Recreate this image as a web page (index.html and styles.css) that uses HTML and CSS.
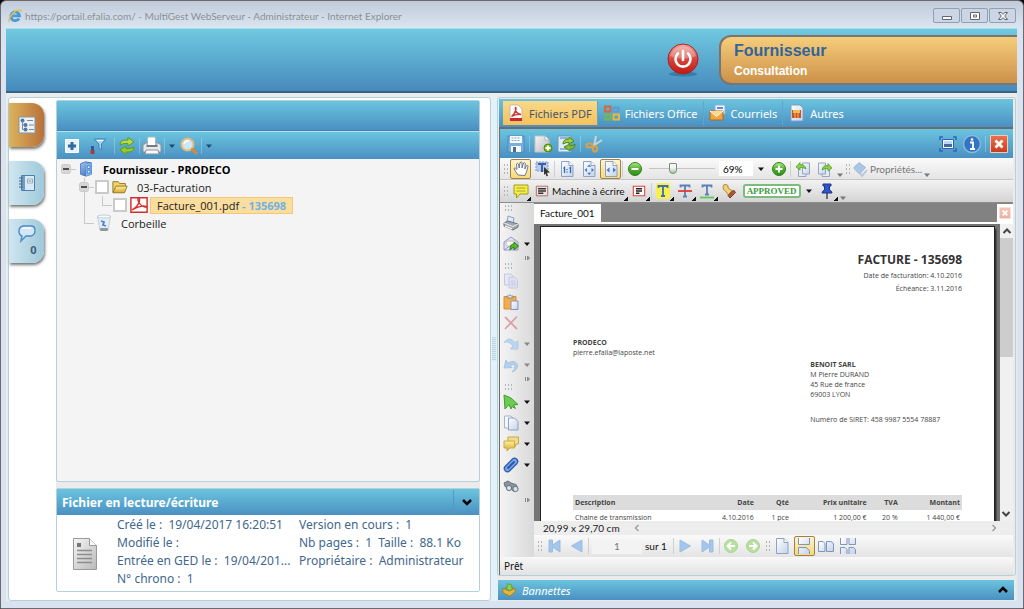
FILE: index.html
```html
<!DOCTYPE html>
<html lang="fr">
<head>
    <meta charset="UTF-8">
    <meta name="viewport" content="width=device-width, initial-scale=1.0">
    <title>MultiGest WebServeur - Administrateur</title>
    <link rel="stylesheet" href="styles.css">
</head>
<body>
    <!-- Icones -->
    <svg class="sprite" aria-hidden="true">
        <defs>
            <linearGradient id="gRed" x1="0" y1="0" x2="0" y2="1"><stop offset="0" stop-color="#f0a8a4"/><stop offset=".5" stop-color="#d8463c"/><stop offset="1" stop-color="#c01810"/></linearGradient>
            <linearGradient id="gPage" x1="0" y1="0" x2="1" y2="1"><stop offset="0" stop-color="#ffffff"/><stop offset="1" stop-color="#c3d2ea"/></linearGradient>
            <linearGradient id="gGrey" x1="0" y1="0" x2="1" y2="1"><stop offset="0" stop-color="#f6f6f6"/><stop offset="1" stop-color="#b9b9b9"/></linearGradient>
            <linearGradient id="gGreen" x1="0" y1="0" x2="0" y2="1"><stop offset="0" stop-color="#b4e88c"/><stop offset=".5" stop-color="#4fae2c"/><stop offset="1" stop-color="#2f8f18"/></linearGradient>
            <linearGradient id="gBlue" x1="0" y1="0" x2="1" y2="1"><stop offset="0" stop-color="#a9cdf5"/><stop offset="1" stop-color="#2355a8"/></linearGradient>
            <linearGradient id="gGold" x1="0" y1="0" x2="0" y2="1"><stop offset="0" stop-color="#fff0a0"/><stop offset="1" stop-color="#d9a52c"/></linearGradient>
            <linearGradient id="gClose" x1="0" y1="0" x2="0" y2="1"><stop offset="0" stop-color="#e8744e"/><stop offset="1" stop-color="#c93c1c"/></linearGradient>
        </defs>
        <symbol id="ie" viewBox="0 0 16 16"><path d="M12.600 10.800A5 5 0 1 1 13.200 7.800H5" fill="none" stroke="#4a9ad4" stroke-width="3.200"/><path d="M2 14.600C-.6 12.600 3.600 5.600 8.600 2.500 12.200.400 15.400.400 15.100 3.400" fill="none" stroke="#e6c04a" stroke-width="1.700"/></symbol>
        <symbol id="power" viewBox="0 0 32 34"><ellipse cx="16" cy="31" rx="14" ry="2.500" fill="#1f5d8c" opacity=".5"/><circle cx="16" cy="16" r="15" fill="url(#gRed)" stroke="#a8251f"/><path d="M3 13a13.500 13.500 0 0 1 26 0q-13 6-26 0z" fill="#fff" opacity=".28"/><path d="M11 10.500a7.500 7.500 0 1 0 10 0M16 8v9" fill="none" stroke="#fff" stroke-width="2.600" stroke-linecap="round"/></symbol>
        <symbol id="treeTab" viewBox="0 0 18 18"><path d="M1 1h16v16H1z" fill="#eef2f7" stroke="#8795a8"/><circle cx="4.500" cy="4.500" r="2" fill="#4878a8"/><circle cx="7.500" cy="9" r="2" fill="#4878a8"/><circle cx="7.500" cy="13.500" r="2" fill="#4878a8"/><path d="M4.500 5v8.500h2M4.500 9h2M9 4.500h6M11 9h5M11 13.500h5" fill="none" stroke="#7b899a"/></symbol>
        <symbol id="bookTab" viewBox="0 0 18 18"><path d="M3.500 1.500h13v15h-13z" fill="#dbe9f6" stroke="#4b7faf"/><path d="M4 2h3v14H4z" fill="#6d9dc8"/><path d="M9.500 5h5v4h-5z" fill="#fff" stroke="#9ab"/><path d="M10.500 7h3" stroke="#56789a"/><path d="M1 4h4M1 7h4M1 10h4M1 13h4" stroke="#4a6687"/></symbol>
        <symbol id="talkTab" viewBox="0 0 18 18"><path d="M5 1h8q4 0 4 4.500T13 11H8l-5 5 1-5Q1 10 1 6t4-5z" fill="#d2e7fa" stroke="#4c8bc4" stroke-width="1.400"/><path d="M4 4q2-1.500 9-1" stroke="#fff" stroke-width="1.500" fill="none"/></symbol>
        <symbol id="plus" viewBox="0 0 16 16"><path d="M1.500 1.500h13v13h-13z" fill="#e8f2fb" stroke="#fff"/><path d="M8 4v8M4 8h8" stroke="#2f6aa3" stroke-width="3"/></symbol>
        <symbol id="filter" viewBox="0 0 18 18"><path d="M5 2h12l-4.500 5v6l-2.500-2V7z" fill="#a8d3f3" stroke="#4181bb"/><path d="M8 3.500h6" stroke="#fff"/><path d="M2 9h3v4H2z" fill="#31599a"/><path d="M1.500 13h4v4h-4z" fill="#a0403c"/></symbol>
        <symbol id="refresh" viewBox="0 0 18 18"><path d="M2 8q0-5 6-5h2V.500L16 5l-6 4V6.500H7Q5 6.500 2 8z" fill="#b5dc48" stroke="#5f9a1c"/><path d="M16 10q0 5-6 5H8v2.500L2 13l6-4v2.500h3q2 0 5-1.500z" fill="#95cb32" stroke="#5f9a1c"/></symbol>
        <symbol id="print" viewBox="0 0 20 20"><path d="M6 1h7l1 9H5z" fill="#fff" stroke="#b3b9c1"/><path d="M1 9l3-2h12l3 2v7H1z" fill="#e6e8eb" stroke="#8a929b"/><path d="M4.500 8.500h11V11h-11z" fill="#737b85"/><path d="M6 2h7v7H6z" fill="#fff"/><path d="M4 14h12l1 4H3z" fill="#fafafa" stroke="#8b929b"/></symbol>
        <symbol id="search" viewBox="0 0 18 18"><circle cx="7.500" cy="7.500" r="6" fill="#cce8f8" stroke="#e6bb78" stroke-width="2"/><path d="M4 7q1-4 5-3" stroke="#fff" stroke-width="1.500" fill="none"/><path d="M12.500 12.500l3.500 3.500" stroke="#d68a3c" stroke-width="3" stroke-linecap="round"/></symbol>
        <symbol id="caret" viewBox="0 0 8 8"><path d="M1 2.500h6L4 6z" fill="currentColor"/></symbol>
        <symbol id="more" viewBox="0 0 8 8"><path d="M1.500 2v4M3.500 2L5.500 4l-2 2z" fill="#999" stroke="#888"/></symbol>
        <symbol id="minusBox" viewBox="0 0 10 10"><rect x=".5" y=".5" width="9" height="9" rx="2" fill="#d6d6d6" stroke="#cacaca"/><path d="M2 5h6" stroke="#222" stroke-width="1.500"/></symbol>
        <symbol id="cabinet" viewBox="0 0 16 18"><path d="M2 3l5-2 7 1v13l-6 2-6-2z" fill="url(#gBlue)" stroke="#3a6db8"/><path d="M8 3.500l6-1v13l-6 1.500z" fill="#7eb2ee"/><path d="M9.500 5.500h3v3h-3zM9.500 10.500h3v3h-3z" fill="#e9f4ff" stroke="#4a80c4"/></symbol>
        <symbol id="folder" viewBox="0 0 18 16"><path d="M1 14V2h6l1.500 2H15v3" fill="#f1d06a" stroke="#8d7220"/><path d="M1 14.500L4.500 7H17l-3 7.500z" fill="url(#gGold)" stroke="#8d7220"/></symbol>
        <symbol id="pdf" viewBox="0 0 20 18"><path d="M1 1h18v16H1z" fill="#fff" stroke="#d62c28" stroke-width="1.600"/><path d="M2 14.500q6-3 8.500-9.500.5-4-1-3.500-1.500.5 0 4Q12 11 18 11.500q1-1.500-3-1.500-6 .5-13 4.500z" fill="none" stroke="#d62c28" stroke-width="1.500"/></symbol>
        <symbol id="bin" viewBox="0 0 16 18"><path d="M1.500 2h13L12 16.500H4z" fill="#e5edf4" stroke="#c4ced8"/><ellipse cx="8" cy="2.500" rx="6.500" ry="1.500" fill="#f9fcff" stroke="#c4ced8"/><path d="M5 7l3 1-1 3 3 1" fill="none" stroke="#4c84d0" stroke-width="1.800"/><path d="M4 14h8l-.5 3h-7z" fill="#8f979f"/></symbol>
        <symbol id="pdfFile" viewBox="0 0 18 18"><path d="M3 1h8l4 4v12H3z" fill="#fff" stroke="#c4b9b4"/><path d="M3 14h12v3H3z" fill="#cf2a22"/><path d="M4.500 12.500Q8 10 9 5q0-2.500-.7-1-.3 5 5.700 6.500-5-.5-9.500 2z" fill="none" stroke="#d3362d" stroke-width="1.400"/></symbol>
        <symbol id="office" viewBox="0 0 18 18" fill="none" stroke-width="2"><path d="M2 2.500h5.500v5H2z" stroke="#d8653c"/><path d="M10.500 3.500h5v4h-5z" stroke="#5a9bdc"/><path d="M2.500 10.500h5v5h-5z" stroke="#7bb648"/><path d="M10.500 10.500h5.500v5h-5.500z" stroke="#eab83a"/></symbol>
        <symbol id="mail" viewBox="0 0 18 18"><path d="M6 1h10v9H6z" fill="#f0f6ff" stroke="#8aaede"/><path d="M8 3h6v2H8z" fill="#5d8fd4"/><path d="M1 7h13v9H1z" fill="#efa640" stroke="#b9661c"/><path d="M1 7l6.500 5.500L14 7" fill="#ffd88c" stroke="#fff"/></symbol>
        <symbol id="picture" viewBox="0 0 18 18"><path d="M3 1h9l3 3v13H3z" fill="url(#gPage)" stroke="#7f9ccc"/><path d="M4 6h9v8H4z" fill="#c8522a"/><path d="M5 6h7v3H5z" fill="#f3bd4e"/><path d="M7 9v5M10 9v5" stroke="#f3bd4e"/></symbol>
        <symbol id="save" viewBox="0 0 18 18"><path d="M1 1h16v16H1z" fill="#76b0e0" stroke="#4f88c0"/><path d="M3 1h12v7H3z" fill="#f4f9fd"/><path d="M4.500 3h9M4.500 5.500h9" stroke="#8fa4b8" stroke-dasharray="2 1"/><path d="M4 11h10v6H4z" fill="#f7f7f7"/><path d="M6 12h3v5H6z" fill="#4b6d92"/></symbol>
        <symbol id="newDoc" viewBox="0 0 20 18"><path d="M2 1h10l4 4v12H2z" fill="url(#gGrey)" stroke="#c3c3c3"/><path d="M12 1v4h4" fill="#fff" stroke="#b3b3b3"/><circle cx="15" cy="13" r="4" fill="#80bb33" stroke="#4e8715"/><path d="M15 10.500v5M12.500 13h5" stroke="#fff" stroke-width="1.800"/></symbol>
        <symbol id="reload" viewBox="0 0 20 18"><path d="M1 1h13v16H1z" fill="#dcebf8" stroke="#6698c6"/><path d="M3 3h8M3 14h7" stroke="#8fb4d8" stroke-width="2"/><path d="M6 9q0-5 6-5V2l5 4-5 3V7.500Q9 7 6 9z" fill="#a0d13c" stroke="#4c8415"/><path d="M18 9q0 5-5 5v2l-6-4 6-3v2q3 0 5-2z" fill="#87c02e" stroke="#4c8415"/></symbol>
        <symbol id="scissors" viewBox="0 0 18 18"><path d="M11 1L9 11M17 5L8 11" stroke="#c9d3dc" stroke-width="2"/><ellipse cx="4.500" cy="10.500" rx="3" ry="2" fill="none" stroke="#d9a04a" stroke-width="2"/><ellipse cx="10" cy="14" rx="2.200" ry="2.800" fill="none" stroke="#d9a04a" stroke-width="2"/></symbol>
        <symbol id="full" viewBox="0 0 18 18"><path d="M3.500 4.500h11v9h-11z" fill="#fff" stroke="#2b61ae"/><path d="M5 6h8v3H5z" fill="#bcd8f2"/><path d="M5 9h8v3H5z" fill="#46689a"/><path d="M1 5V2h3M14 2h3v3M17 13v3h-3M4 16H1v-3" fill="none" stroke="#2c63c4" stroke-width="1.500"/></symbol>
        <symbol id="info" viewBox="0 0 20 20"><circle cx="10" cy="10" r="8.500" fill="#3475c2" stroke="#8ab8e8" stroke-width="1.500"/><path d="M8 8.500h3V15M8 15h5" fill="none" stroke="#fff" stroke-width="1.800"/><circle cx="10" cy="5.500" r="1.300" fill="#fff"/></symbol>
        <symbol id="closeBox" viewBox="0 0 18 18"><path d="M.5.5h17v17H.5z" fill="url(#gClose)" stroke="#f5c9b8"/><path d="M5.500 5.500l7 7M12.500 5.500l-7 7" stroke="#fff" stroke-width="2.800"/></symbol>
        <symbol id="hand" viewBox="0 0 16 16"><path d="M5 14Q2 10 1 7.500q1-1.500 3 1L3.500 3q1.200-1.200 2 0l.7 4L7 1.500q1.200-1 2 0V7l1.500-5q1.200-.8 1.800.3L11.800 8l1.700-3.500q1.300-.5 1.500.7Q13.500 12 12 14.500z" fill="#fff" stroke="#6d7a90"/></symbol>
        <symbol id="textSel" viewBox="0 0 16 16"><path d="M1 1h12v9H1z" fill="#b9cbe8" stroke="#7e9bc9" stroke-dasharray="2 1"/><path d="M3 3h8M7 3v8" stroke="#3760a6" stroke-width="2"/><path d="M9 6l6 5.500-3 .3 1 3-1.500.7-1-3L9 14z" fill="#333"/></symbol>
        <symbol id="page" viewBox="0 0 16 16"><path d="M2.500.5H10l4 4v11H2.500z" fill="url(#gPage)" stroke="#8da2c4"/><path d="M10 .5v4h4" fill="#fff" stroke="#8da2c4"/></symbol>
        <symbol id="page11" viewBox="0 0 16 16"><use href="#page" width="16" height="16"/><path d="M4.500 7.500l1-1V12M10.500 7.500l1-1V12M8 8v1M8 10.500v1" fill="none" stroke="#2b68c0" stroke-width="1.300"/></symbol>
        <symbol id="pageFit" viewBox="0 0 16 16"><use href="#page" width="16" height="16"/><path d="M8.200 3.500l2 2.300h-4zM8.200 14l2-2.300h-4zM3.500 9l2.500-2v4zM13 9l-2.500-2v4z" fill="#3c7ad0"/></symbol>
        <symbol id="pageWide" viewBox="0 0 16 16"><use href="#page" width="16" height="16"/><path d="M3.500 9l3-2.500v5zM13 9l-3-2.500v5z" fill="#3c7ad0"/></symbol>
        <symbol id="minusBall" viewBox="0 0 16 16"><circle cx="8" cy="8" r="6.500" fill="url(#gGreen)" stroke="#318018"/><path d="M4.500 8h7" stroke="#fff" stroke-width="2"/></symbol>
        <symbol id="plusBall" viewBox="0 0 16 16"><circle cx="8" cy="8" r="6.500" fill="url(#gGreen)" stroke="#318018"/><path d="M4.500 8h7M8 4.500v7" stroke="#fff" stroke-width="2"/></symbol>
        <symbol id="rotL" viewBox="0 0 16 16"><path d="M3.500 5H11v10.500H3.500z" fill="#e5e9f2" stroke="#98a5bc"/><path d="M7.500 2h7v11h-7z" fill="url(#gPage)" stroke="#98a5bc"/><path d="M1 6l4-4.500v2.200q5-.7 6 4.300-3-2-6-1.500V9z" fill="#8ccf4c" stroke="#4b9a20" stroke-width=".7"/></symbol>
        <symbol id="rotR" viewBox="0 0 16 16"><path d="M5 5h7.500v10.500H5z" fill="#e5e9f2" stroke="#98a5bc"/><path d="M1.500 2h7v11h-7z" fill="url(#gPage)" stroke="#98a5bc"/><path d="M15 7l-4-4.500v2.200q-5-.7-6 4.300 3-2 6-1.500V10z" fill="#8ccf4c" stroke="#4b9a20" stroke-width=".7"/></symbol>
        <symbol id="tag" viewBox="0 0 16 16"><path d="M1.500 7L7 1.500l6.500 5L7.500 13z" fill="#a9c6e6" stroke="#9fb8d8"/><path d="M8 12l2 3 5-6" fill="none" stroke="#b5c4dc" stroke-width="1.800"/></symbol>
        <symbol id="note" viewBox="0 0 16 16"><path d="M1 2h14v9H7l-3.500 4V11H1z" fill="#f7ee4a" stroke="#a09a1c"/><path d="M3.500 5h9M3.500 8h9" stroke="#a8a230"/></symbol>
        <symbol id="boxType" viewBox="0 0 16 16"><path d="M1.500 2.500h13v11h-13z" fill="#e8e4e4" stroke="#b0605c"/><path d="M3.500 5.500h9M3.500 8h9M3.500 10.500h6" stroke="#333" stroke-width="1.600"/></symbol>
        <symbol id="box" viewBox="0 0 16 16"><path d="M1.500 2.500h13v11h-13z" fill="#fff" stroke="#e04038" stroke-width="1.200"/><path d="M4.500 5.500h7M4.500 8h7M4.500 10.500h4" stroke="#222" stroke-width="1.600"/></symbol>
        <symbol id="tHigh" viewBox="0 0 16 16"><rect x="1" y="0" width="14" height="16" rx="2" fill="#f8f04e"/><path d="M3.500 5V3h9v2M8 3v10M6 13h4" fill="none" stroke="#3f6db3" stroke-width="1.800"/></symbol>
        <symbol id="tStrike" viewBox="0 0 16 16"><path d="M3.500 4.500V2.500h9v2M8 2.500v11M6 13.500h4" fill="none" stroke="#5a80b8" stroke-width="1.800"/><path d="M1 8h14" stroke="#e03c34" stroke-width="1.800"/></symbol>
        <symbol id="tUnder" viewBox="0 0 16 16"><path d="M3.500 4.500V2.500h9v2M8 2.500v9M6 11.500h4" fill="none" stroke="#5a80b8" stroke-width="1.800"/><path d="M1 14.500h14" stroke="#5bc95b" stroke-width="1.800"/></symbol>
        <symbol id="stamp" viewBox="0 0 16 16"><path d="M2 4q0-3 3-2.500 3 .5 2 3.500l4 2.500-3.500 4.500-3-4Q2 7.500 2 4z" fill="#efd07c" stroke="#b58c36"/><path d="M7 12.500L12.500 7l2 2.500L9 15z" fill="#a85a36" stroke="#7e3c20"/></symbol>
        <symbol id="pin" viewBox="0 0 16 16"><path d="M4 1h8v2h-1.500v4Q13 8 13 10H3q0-2 2.500-3V3H4z" fill="#3055c8" stroke="#1b3590"/><path d="M8 10v6" stroke="#333" stroke-width="1.300"/></symbol>
        <symbol id="printer" viewBox="0 0 16 16"><path d="M5 1l6 2-1 6-6-2z" fill="#dcebfb" stroke="#8ba3c2"/><path d="M1 8l4-2 10 3v3l-5 3-9-4z" fill="#a4a9ae" stroke="#6a6e73"/><path d="M1 8l9 3.500L15 9" fill="none" stroke="#eee"/><path d="M2 11l7 3" stroke="#fff" stroke-width="1.300"/></symbol>
        <symbol id="send" viewBox="0 0 16 16"><path d="M1 6l7-5 7 5v8H1z" fill="#e1e3fa" stroke="#9496d0"/><path d="M3 5h10v4l-5 3-5-3z" fill="#f8fbe0" stroke="#b9b9d0"/><path d="M1 14l7-5 7 5" fill="none" stroke="#9496d0"/><path d="M7 14q0-6 4-6V6l4.500 4-4.500 4v-2.500q-2 0-4 2.500z" fill="#58b82e" stroke="#2c7a12"/></symbol>
        <symbol id="copy" viewBox="0 0 16 16"><path d="M1.500 1H8l2 2v9H1.500z" fill="#e6e7f5" stroke="#c6c8e0"/><path d="M6 4h6l2.500 2.500V15H6z" fill="#dfe0f2" stroke="#c6c8e0"/><path d="M8 8h4M8 10h5M8 12h5" stroke="#c6c8e0"/></symbol>
        <symbol id="paste" viewBox="0 0 16 16"><path d="M1 2.500h12V15H1z" fill="#f4ac4c" stroke="#d29238"/><path d="M4 4V2h1.500Q7-.5 8.500 2H10v2z" fill="#e5e5e5" stroke="#8a8a8a"/><path d="M8 7h7v8.500H8z" fill="url(#gPage)" stroke="#8b8fc0"/></symbol>
        <symbol id="del" viewBox="0 0 16 16"><path d="M2 2l12 12M14 1.500L2 14" fill="none" stroke="#dca0aa" stroke-width="1.800"/></symbol>
        <symbol id="redo" viewBox="0 0 16 16"><path d="M1 6.500Q6-.5 12 6.500L15 5v8H7.500l2.700-3Q6 4.500 1 6.500z" fill="#bcd5ef" stroke="#b0cbe8"/></symbol>
        <symbol id="undo" viewBox="0 0 16 16"><path d="M9 15q6-2 5.500-7Q12 2 5 6L3 3 1 11l8-.5-2-2q5-2.500 5 1 0 3-3 5.500z" fill="#b4d0ee" stroke="#a6c4e4"/></symbol>
        <symbol id="arrow" viewBox="0 0 16 16"><path d="M1 1l7 3 7 6.500-4.500.3 2 3.700-3.500-2-1 2.500-2-4.500L2 15z" fill="#6ccc50" stroke="#409c34"/></symbol>
        <symbol id="pages" viewBox="0 0 16 16"><path d="M1.500 1H8l2 2v10H1.500z" fill="#f4f8fd" stroke="#a5b4cc"/><path d="M5.500 3h6L15 6.500V15H5.500z" fill="url(#gPage)" stroke="#8da2c4"/></symbol>
        <symbol id="talk" viewBox="0 0 16 16"><path d="M5 1h10.500v7H13l-1 3-2-3H5z" fill="#f3dc8c" stroke="#c9a848"/><path d="M1 5h10.500v7H7l-3 3v-3H1z" fill="url(#gGold)" stroke="#c9a848"/></symbol>
        <symbol id="clip" viewBox="0 0 16 16"><path d="M4.500 11.500l7-7" fill="none" stroke="#2c58ae" stroke-width="7.500" stroke-linecap="round"/><path d="M4.500 11.500l7-7" fill="none" stroke="#7ea6e2" stroke-width="5" stroke-linecap="round"/><path d="M5 11l6-6" stroke="#2c58ae" stroke-width="2" stroke-linecap="round"/></symbol>
        <symbol id="bino" viewBox="0 0 16 16"><path d="M1 5l4-2 4 2.500 4 1 2 4-4 3-4-3-5-2z" fill="#8a949b" stroke="#6a7278"/><circle cx="6" cy="10" r="2.600" fill="#cfe4f2" stroke="#6a7278"/><circle cx="12.500" cy="11" r="2.600" fill="#cfe4f2" stroke="#6a7278"/></symbol>
        <symbol id="first" viewBox="0 0 16 16"><path d="M2 2h3.500v5L13 2v12L5.500 9v5H2z" fill="#a4c6ea" stroke="#9cbde2"/></symbol>
        <symbol id="prev" viewBox="0 0 16 16"><path d="M13 2v12L2.500 8z" fill="#a4c6ea" stroke="#9cbde2"/></symbol>
        <symbol id="next" viewBox="0 0 16 16"><path d="M3 2v12l10.500-6z" fill="#a4c6ea" stroke="#9cbde2"/></symbol>
        <symbol id="last" viewBox="0 0 16 16"><path d="M14 2h-3.500v5L3 2v12l7.500-5v5H14z" fill="#a4c6ea" stroke="#9cbde2"/></symbol>
        <symbol id="back" viewBox="0 0 16 16"><circle cx="8" cy="8" r="6.500" fill="#b8dfa0" stroke="#acd494"/><path d="M12 8H5M8 4.500L4.500 8 8 11.500" fill="none" stroke="#fff" stroke-width="2"/></symbol>
        <symbol id="fwd" viewBox="0 0 16 16"><circle cx="8" cy="8" r="6.500" fill="#b8dfa0" stroke="#acd494"/><path d="M4 8h7M8 4.500l3.500 3.500L8 11.500" fill="none" stroke="#fff" stroke-width="2"/></symbol>
        <symbol id="cont" viewBox="0 0 16 16"><path d="M2.500 0v6.500h11V0M2.500 16V9.500H10l3.500 3V16" fill="url(#gPage)" stroke="#7f95ba"/></symbol>
        <symbol id="two" viewBox="0 0 16 16"><path d="M.5 3.500H5l2 2v8H.5zM8.500 3.500H13l2.500 2v8h-7z" fill="url(#gPage)" stroke="#7f95ba"/></symbol>
        <symbol id="four" viewBox="0 0 16 16"><path d="M.5 0v6.500H7V0M9 0v6.500h6.500V0M.5 16V9.500H5l2 2V16M9 16V9.500h4.500l2 2V16" fill="url(#gPage)" stroke="#7f95ba"/></symbol>
        <symbol id="doc" viewBox="0 0 24 32"><path d="M.5.5h16l7 7v24H.5z" fill="url(#gGrey)" stroke="#9a9a9a"/><path d="M16.500.5v7h7" fill="#f8f8f8" stroke="#9a9a9a"/><path d="M4 5h4v4H4z" fill="#777"/><path d="M4 12.500h15M4 16.500h15M4 20.500h15M4 24.500h15" stroke="#8d8d8d" stroke-width="1.500"/></symbol>
        <symbol id="chevDown" viewBox="0 0 10 10"><path d="M1 3l4 4 4-4" fill="none" stroke="currentColor" stroke-width="2.500"/></symbol>
        <symbol id="chevUp" viewBox="0 0 10 10"><path d="M1 7l4-4 4 4" fill="none" stroke="currentColor" stroke-width="2.500"/></symbol>
        <symbol id="chevThin" viewBox="0 0 10 10"><path d="M1.500 7L5 3.500 8.500 7" fill="none" stroke="currentColor" stroke-width="2"/></symbol>
        <symbol id="chevLeft" viewBox="0 0 10 10"><path d="M6.500 2l-3 3 3 3" fill="none" stroke="currentColor" stroke-width="1.300"/></symbol>
        <symbol id="chevRight" viewBox="0 0 10 10"><path d="M3.500 2l3 3-3 3" fill="none" stroke="currentColor" stroke-width="1.300"/></symbol>
        <symbol id="tray" viewBox="0 0 16 16"><path d="M1 6l7 3 7-3v4l-6 5-8-4z" fill="#e4b63c" stroke="#a77a1c"/><path d="M6 1l5 1v3h2L8.500 9 4 5h2z" fill="#8ed04a" stroke="#4f9420" stroke-width=".7"/></symbol>
        <symbol id="wMin" viewBox="0 0 12 10"><path d="M1.500 5.500h9v3h-9z" fill="#fff" stroke="#5e6674"/></symbol>
        <symbol id="wMax" viewBox="0 0 12 10"><path d="M1.500 1.500h9v7h-9z" fill="#fff" stroke="#5e6674"/><path d="M4.500 4h3v2h-3z" fill="#fff" stroke="#5e6674"/></symbol>
        <symbol id="wClose" viewBox="0 0 12 10"><path d="M1.500 1.500H4l2 1.800 2-1.800h2.500L7.700 5l2.800 3.500H8L6 6.700 4 8.500H1.500L4.300 5z" fill="#fff" stroke="#5e6674"/></symbol>
    </svg>

    <div class="window">
        <div class="titlebar">
            <svg class="i14"><use href="#ie"/></svg>
            <span class="title">https://portail.efalia.com/ - MultiGest WebServeur - Administrateur - Internet Explorer</span>
            <div class="win-buttons">
                <button aria-label="Réduire"><svg><use href="#wMin"/></svg></button>
                <button aria-label="Agrandir"><svg><use href="#wMax"/></svg></button>
                <button aria-label="Fermer la fenêtre"><svg><use href="#wClose"/></svg></button>
            </div>
        </div>

        <header>
            <button class="power" aria-label="Déconnexion"><svg><use href="#power"/></svg></button>
            <div class="context">
                <h1>Fournisseur</h1>
                <p>Consultation</p>
            </div>
        </header>

        <main>
            <section class="left">
                <nav class="side-tabs">
                    <button class="active" aria-label="Arborescence"><svg class="i18"><use href="#treeTab"/></svg></button>
                    <button aria-label="Répertoire"><svg class="i18"><use href="#bookTab"/></svg></button>
                    <button aria-label="Commentaires"><svg class="i18"><use href="#talkTab"/></svg><b>0</b></button>
                </nav>
                <div class="left-content">
                    <div class="tree-panel">
                        <div class="bar head"></div>
                        <div class="bar tree-tools">
                            <button aria-label="Tout déplier"><svg class="i16"><use href="#plus"/></svg></button>
                            <button aria-label="Filtrer"><svg class="i18"><use href="#filter"/></svg></button>
                            <i class="sep"></i>
                            <button aria-label="Actualiser"><svg class="i18"><use href="#refresh"/></svg></button>
                            <i class="sep"></i>
                            <button aria-label="Imprimer"><svg class="i20"><use href="#print"/></svg></button>
                            <i class="sep"></i>
                            <button class="drop" aria-label="Options d'impression"><svg class="i8"><use href="#caret"/></svg></button>
                            <button aria-label="Rechercher"><svg class="i18"><use href="#search"/></svg></button>
                            <i class="sep"></i>
                            <button class="drop" aria-label="Options de recherche"><svg class="i8"><use href="#caret"/></svg></button>
                        </div>
                        <ul class="tree">
                            <li>
                                <div class="node"><button aria-label="Replier"><svg class="i10"><use href="#minusBox"/></svg></button><i class="link"></i><svg class="i16"><use href="#cabinet"/></svg><b>Fournisseur - PRODECO</b></div>
                                <ul>
                                    <li>
                                        <div class="node"><button aria-label="Replier 03-Facturation"><svg class="i10"><use href="#minusBox"/></svg></button><i class="link"></i><input type="checkbox" id="c1"><svg class="i16"><use href="#folder"/></svg><label for="c1">03-Facturation</label></div>
                                        <ul>
                                            <li class="node"><i class="link long"></i><input type="checkbox" id="c2"><svg class="i18"><use href="#pdf"/></svg><label for="c2" class="selected">Facture_001.pdf <b>- 135698</b></label></li>
                                        </ul>
                                    </li>
                                    <li class="node trash"><i class="link long"></i><svg class="i18"><use href="#bin"/></svg><span>Corbeille</span></li>
                                </ul>
                            </li>
                        </ul>
                    </div>
                    <div class="details">
                        <div class="bar details-head">
                            <h2>Fichier en lecture/écriture</h2>
                            <button aria-label="Replier le détail"><svg class="i10"><use href="#chevDown"/></svg></button>
                        </div>
                        <div class="details-body">
                            <svg class="doc-icon"><use href="#doc"/></svg>
                            <div class="infos">
                                <p>Créé le :&nbsp; 19/04/2017 16:20:51</p><p>Version en cours :&nbsp; 1</p>
                                <p>Modifié le :</p><p>Nb pages :&nbsp; 1 &nbsp;Taille :&nbsp; 88.1 Ko</p>
                                <p>Entrée en GED le :&nbsp; 19/04/201...</p><p>Propriétaire :&nbsp; Administrateur</p>
                                <p>N° chrono :&nbsp; 1</p>
                            </div>
                        </div>
                    </div>
                </div>
            </section>

            <div class="splitter"><i></i></div>

            <div class="right-col">
                <section class="right">
                    <nav class="bar file-tabs">
                        <a href="#" class="active"><svg class="i18"><use href="#pdfFile"/></svg>Fichiers PDF</a>
                        <a href="#"><svg class="i18"><use href="#office"/></svg>Fichiers Office</a>
                        <a href="#"><svg class="i18"><use href="#mail"/></svg>Courriels</a>
                        <a href="#"><svg class="i18"><use href="#picture"/></svg>Autres</a>
                    </nav>
                    <div class="viewer">
                        <div class="bar file-tools">
                            <button aria-label="Enregistrer"><svg class="i18"><use href="#save"/></svg></button>
                            <i class="sep"></i>
                            <button aria-label="Nouveau"><svg class="i20"><use href="#newDoc"/></svg></button>
                            <button aria-label="Recharger"><svg class="i20"><use href="#reload"/></svg></button>
                            <i class="sep"></i>
                            <button aria-label="Découper"><svg class="i18"><use href="#scissors"/></svg></button>
                            <span class="fill"></span>
                            <button aria-label="Plein écran"><svg class="i18"><use href="#full"/></svg></button>
                            <button aria-label="Informations"><svg class="i20"><use href="#info"/></svg></button>
                            <i class="sep"></i>
                            <button aria-label="Fermer le document"><svg class="i18"><use href="#closeBox"/></svg></button>
                        </div>

                        <div class="tools">
                            <i class="grip"></i>
                            <button class="on" aria-label="Main"><svg class="i16"><use href="#hand"/></svg></button>
                            <button aria-label="Sélection de texte"><svg class="i16"><use href="#textSel"/></svg></button>
                            <i class="sep"></i>
                            <button aria-label="Taille réelle"><svg class="i16"><use href="#page11"/></svg></button>
                            <button aria-label="Page entière"><svg class="i16"><use href="#pageFit"/></svg></button>
                            <button class="on" aria-label="Pleine largeur"><svg class="i16"><use href="#pageWide"/></svg></button>
                            <i class="sep"></i>
                            <button aria-label="Zoom arrière"><svg class="i16"><use href="#minusBall"/></svg></button>
                            <input class="zoom" type="range" min="0" max="100" value="34" aria-label="Zoom">
                            <span class="combo">
                                <select aria-label="Niveau de zoom"><option>69%</option></select>
                                <svg class="i8"><use href="#caret"/></svg>
                            </span>
                            <button aria-label="Zoom avant"><svg class="i16"><use href="#plusBall"/></svg></button>
                            <i class="sep"></i>
                            <button aria-label="Rotation à gauche"><svg class="i16"><use href="#rotL"/></svg></button>
                            <button aria-label="Rotation à droite"><svg class="i16"><use href="#rotR"/></svg></button>
                            <svg class="i8 low"><use href="#caret"/></svg>
                            <i class="grip"></i>
                            <button class="props"><svg class="i16"><use href="#tag"/></svg>Propriétés...</button>
                            <svg class="i8 low"><use href="#caret"/></svg>
                        </div>

                        <div class="tools second">
                            <i class="grip"></i>
                            <button class="menu" aria-label="Note"><svg class="i16"><use href="#note"/></svg></button>
                            <button class="menu wide"><svg class="i14"><use href="#boxType"/></svg>Machine à écrire</button>
                            <button class="menu" aria-label="Zone de texte"><svg class="i14"><use href="#box"/></svg></button>
                            <i class="sep"></i>
                            <button class="menu" aria-label="Surligner"><svg class="i16"><use href="#tHigh"/></svg></button>
                            <button class="menu" aria-label="Barrer"><svg class="i16"><use href="#tStrike"/></svg></button>
                            <button class="menu" aria-label="Souligner"><svg class="i16"><use href="#tUnder"/></svg></button>
                            <button aria-label="Tampon"><svg class="i16"><use href="#stamp"/></svg></button>
                            <button class="approved">APPROVED</button>
                            <button class="drop" aria-label="Choix du tampon"><svg class="i8"><use href="#caret"/></svg></button>
                            <button class="menu" aria-label="Épingler"><svg class="i16"><use href="#pin"/></svg></button>
                            <svg class="i8 low"><use href="#caret"/></svg>
                        </div>

                        <div class="work">
                            <div class="vtools">
                                <i class="grip flat"></i>
                                <button aria-label="Imprimer le document"><svg class="i16"><use href="#printer"/></svg></button>
                                <button aria-label="Envoyer"><svg class="i16"><use href="#send"/></svg><svg class="i8"><use href="#caret"/></svg></button>
                                <svg class="i8 more"><use href="#more"/></svg>
                                <i class="grip flat"></i>
                                <button aria-label="Copier"><svg class="i16"><use href="#copy"/></svg></button>
                                <button aria-label="Coller"><svg class="i16"><use href="#paste"/></svg></button>
                                <button aria-label="Supprimer"><svg class="i16"><use href="#del"/></svg></button>
                                <button class="off" aria-label="Rétablir"><svg class="i16"><use href="#redo"/></svg><svg class="i8"><use href="#caret"/></svg></button>
                                <button class="off" aria-label="Annuler"><svg class="i16"><use href="#undo"/></svg><svg class="i8"><use href="#caret"/></svg></button>
                                <svg class="i8 more"><use href="#more"/></svg>
                                <i class="grip flat"></i>
                                <button aria-label="Signets"><svg class="i16"><use href="#arrow"/></svg><svg class="i8"><use href="#caret"/></svg></button>
                                <button aria-label="Vignettes"><svg class="i16"><use href="#pages"/></svg><svg class="i8"><use href="#caret"/></svg></button>
                                <button aria-label="Annotations"><svg class="i16"><use href="#talk"/></svg><svg class="i8"><use href="#caret"/></svg></button>
                                <button aria-label="Pièces jointes"><svg class="i16"><use href="#clip"/></svg><svg class="i8"><use href="#caret"/></svg></button>
                                <button aria-label="Chercher dans le document"><svg class="i16"><use href="#bino"/></svg></button>
                                <svg class="i8 more"><use href="#more"/></svg>
                            </div>
                            <div class="doc-area">
                                <div class="doc-tabs">
                                    <a href="#">Facture_001</a>
                                    <button aria-label="Fermer l'onglet"><svg class="i12"><use href="#closeBox"/></svg></button>
                                </div>
                                <div class="page-view">
                                    <div class="canvas">
                                        <article class="paper">
                                            <h3>FACTURE - 135698</h3>
                                            <p class="meta">Date de facturation: 4.10.2016<br>Échéance: 3.11.2016</p>
                                            <p class="from"><b>PRODECO</b><br>pierre.efalia@laposte.net</p>
                                            <div class="to">
                                                <p><b>BENOIT SARL</b><br>M Pierre DURAND<br>45 Rue de france<br>69003 LYON</p>
                                                <p>Numéro de SIRET: 458 9987 5554 78887</p>
                                            </div>
                                            <table>
                                                <thead>
                                                    <tr><th class="desc">Description</th><th class="date">Date</th><th class="qty">Qté</th><th class="price">Prix unitaire</th><th class="tva">TVA</th><th>Montant</th></tr>
                                                </thead>
                                                <tbody>
                                                    <tr><td>Chaine de transmission</td><td>4.10.2016</td><td>1 pce</td><td>1 200,00 €</td><td>20 %</td><td>1 440,00 €</td></tr>
                                                </tbody>
                                            </table>
                                        </article>
                                    </div>
                                    <div class="scroll">
                                        <button aria-label="Monter"><svg class="i10"><use href="#chevThin"/></svg></button>
                                        <i class="thumb"></i>
                                        <button class="down" aria-label="Descendre"><svg class="i10"><use href="#chevThin"/></svg></button>
                                    </div>
                                </div>
                                <div class="size-row">
                                    <span>20,99 x 29,70 cm</span>
                                    <svg class="i10"><use href="#chevLeft"/></svg>
                                    <svg class="i10 end"><use href="#chevRight"/></svg>
                                </div>
                                <div class="tools pager">
                                    <i class="grip"></i>
                                    <button aria-label="Première page"><svg class="i16"><use href="#first"/></svg></button>
                                    <button aria-label="Page précédente"><svg class="i16"><use href="#prev"/></svg></button>
                                    <i class="sep"></i>
                                    <input type="text" id="pageNo" value="1">
                                    <label for="pageNo">sur 1</label>
                                    <i class="sep"></i>
                                    <button aria-label="Page suivante"><svg class="i16"><use href="#next"/></svg></button>
                                    <button aria-label="Dernière page"><svg class="i16"><use href="#last"/></svg></button>
                                    <i class="sep"></i>
                                    <button aria-label="Vue précédente"><svg class="i16"><use href="#back"/></svg></button>
                                    <button aria-label="Vue suivante"><svg class="i16"><use href="#fwd"/></svg></button>
                                    <i class="grip"></i>
                                    <button aria-label="Une page"><svg class="i16"><use href="#page"/></svg></button>
                                    <button class="on" aria-label="Continu"><svg class="i16"><use href="#cont"/></svg></button>
                                    <button aria-label="Deux pages"><svg class="i16"><use href="#two"/></svg></button>
                                    <button aria-label="Deux pages en continu"><svg class="i16"><use href="#four"/></svg></button>
                                </div>
                            </div>
                        </div>
                        <div class="status">Prêt</div>
                    </div>
                </section>
                <footer class="bar">
                    <svg class="i14"><use href="#tray"/></svg>
                    <em>Bannettes</em>
                    <button aria-label="Ouvrir les bannettes"><svg class="i10"><use href="#chevUp"/></svg></button>
                </footer>
            </div>
        </main>
    </div>
</body>
</html>
```
FILE: styles.css
```css
* { box-sizing: border-box; }

body {
    margin: 0;
    background: #000;
    font-family: "Noto Sans", "Open Sans", sans-serif;
    font-size: 11px;
    color: #111;
}
h1, h2, h3, p, ul { margin: 0; padding: 0; }
ul { list-style: none; }
a { color: inherit; text-decoration: none; }
svg { display: block; flex: none; }
button {
    display: flex;
    align-items: center;
    justify-content: center;
    flex: none;
    padding: 0;
    border: 0;
    background: none;
    font: inherit;
    color: inherit;
}
.sprite { width: 0; height: 0; }
.i8 { width: 8px; height: 8px; }
.i10 { width: 10px; height: 10px; }
.i12 { width: 12px; height: 12px; }
.i14 { width: 14px; height: 14px; }
.i16 { width: 16px; height: 16px; }
.i18 { width: 18px; height: 18px; }
.i20 { width: 20px; height: 20px; }

/* FENETRE */
.window {
    display: flex;
    flex-direction: column;
    height: 100vh;
    padding: 0 6px 7px 5px;
    border: 1px solid #6f6870;
    border-radius: 6px 6px 0 0;
    background: linear-gradient(#c1cad9, #dae4f0 26px, #d9e3f0);
}
.titlebar {
    display: flex;
    align-items: center;
    gap: 3px;
    height: 27px;
    padding: 2px 0 0 2px;
    font-family: Lato, "Open Sans", sans-serif;
    font-size: 10px;
    color: #8b9096;
}
.win-buttons {
    display: flex;
    gap: 1px;
    margin: 0 1px 0 auto;

    button {
        width: 27px;
        height: 15px;
        border: 1px solid #929eb1;
        border-radius: 2px;
        background: #cbd5e3;
    }
    svg { width: 12px; height: 10px; }
}

header {
    display: flex;
    align-items: center;
    justify-content: flex-end;
    gap: 20px;
    height: 65px;
    border-top: 1px solid #a5e0ea;
    border-bottom: 2px solid #336385;
    background: linear-gradient(#70c9e1, #468abc);

    .power svg { width: 32px; height: 34px; }
}
.context {
    width: 298px;
    height: 50px;
    padding: 4px 13px;
    border: 2px solid #7b756f;
    border-right: 0;
    border-radius: 12px 0 0 12px;
    background: linear-gradient(#f6cd7a, #cc914a);
    font-family: "Liberation Sans", Arial, sans-serif;

    h1 { font-size: 16px; line-height: 20px; color: #31659a; }
    p { font-size: 12px; line-height: 20px; font-weight: bold; color: #fff; }
}

main {
    display: grid;
    grid-template-columns: 483fr 6px 519fr;
    flex: 1;
    min-height: 0;
    padding: 4px 1px 0 2px;
    background: #ebebeb;
}
.bar {
    display: flex;
    align-items: center;
    background: linear-gradient(#6bc4de, #4a90c2);
    color: #fff;
}
.sep {
    width: 1px;
    height: 16px;
    background: #ffffff40;
}

/* GAUCHE */
.left {
    display: flex;
    min-height: 0;
    padding-right: 10px;
    border: 1px solid #b4d1db;
    border-radius: 3px;
    background: #fff;
}
.side-tabs {
    display: flex;
    flex-direction: column;
    flex: none;
    gap: 14px;
    width: 47px;
    padding-top: 5px;

    button {
        flex-direction: column;
        width: 35px;
        height: 44px;
        border-radius: 0 12px 12px 0;
        background: linear-gradient(90deg, #cfe6ef, #9fc9da);
        box-shadow: 1px 2px 3px #777;
    }
    button.active { background: linear-gradient(90deg, #dcb35c, #b8713a); }
    b { padding-left: 14px; font-size: 11px; line-height: 14px; color: #3e5d76; }
}
.left-content {
    display: flex;
    flex-direction: column;
    flex: 1;
    gap: 6px;
    min-width: 0;
    padding: 2px 0 8px;
    background: linear-gradient(#fff 50%, #ebebeb 50%) no-repeat 0 0 / 100% 400px;
}
.tree-panel, .details {
    border: 1px solid #b4d1db;
    border-radius: 2px;
    background: #f4f4f4;
}
.tree-panel { flex: 1; }
.head { height: 30px; border-bottom: 1px solid #3f83b3; }
.tree-tools {
    gap: 2px;
    height: 28px;
    padding-left: 5px;
    border-top: 1px solid #b4e2ee;
    color: #174a77;

    button { width: 20px; height: 22px; }
    .drop { width: 10px; }
    button:nth-child(2) { margin: 0 4px; }
}
.tree {
    padding: 1px 4px;
    font-family: "Open Sans", sans-serif;
    color: #222;

    ul {
        margin-left: 18px;
        background: linear-gradient(#c8c8c8, #c8c8c8) no-repeat 5px 0 / 1px calc(100% - 9px);
    }
}
.node {
    display: flex;
    align-items: center;
    height: 18px;

    > svg { margin: 0 9px 0 2px; }
    > svg.i18 { margin-right: 2px; }
    button { position: relative; z-index: 1; }
    input {
        appearance: none;
        width: 14px;
        height: 14px;
        margin: 0 1px 0 1px;
        border: 2px solid #cacaca;
        background: #fff;
    }
    b { color: #000; }
}
.link { width: 5px; height: 1px; background: #c8c8c8; }
.link.long { width: 10px; margin-left: 5px; }
.trash > svg.i18 { margin: 0 8px 0 1px; }
.selected {
    height: 17px;
    padding: 0 6px;
    border: 1px solid #f2c878;
    background: #fbdd9d;
    line-height: 15px;

    b { color: #6fb1e6; }
}

.details-head {
    justify-content: space-between;
    height: 26px;
    padding-left: 5px;

    h2 { font-size: 12px; }
    button {
        width: 26px;
        height: 24px;
        border-left: 1px solid #5597c2;
        color: #000;
    }
}
.details-body {
    display: flex;
    align-items: center;
    gap: 20px;
    padding: 1px 3px 3px 16px;
    background: #fff;
    font-size: 12px;
    color: #41678c;
}
.doc-icon { width: 24px; height: 32px; margin-top: 4px; }
.infos {
    display: grid;
    grid-template-columns: 182px 1fr;
    flex: 1;
    line-height: 18px;
    white-space: nowrap;
}

.splitter {
    display: flex;
    align-items: center;
    justify-content: center;
    background: #e3f2f6;

    i { width: 4px; height: 24px; background: repeating-linear-gradient(#bcd6e6 0 1px, #dcecf4 1px 2px); }
}

/* DROITE */
.right-col {
    display: flex;
    flex-direction: column;
    gap: 4px;
    min-width: 0;
    min-height: 0;
}
.right {
    display: flex;
    flex-direction: column;
    flex: 1;
    min-height: 0;
    padding: 1px 2px 0 1px;
    border: 1px solid #b4d1db;
    border-radius: 3px;
}
.file-tabs {
    gap: 1px;
    height: 28px;
    padding-left: 4px;

    a {
        display: flex;
        align-items: center;
        gap: 4px;
        height: 24px;
        padding: 0 5px 0 4px;
        border-right: 1px solid #5fa6cc;
    }
    a:last-child { border: 0; }
    a.active { background: linear-gradient(#f9d98c, #f5c15a); color: #44586a; }
}
.viewer {
    display: flex;
    flex-direction: column;
    flex: 1;
    min-height: 0;
    border-top: 2px solid #6c6c6c;
    border-left: 1px solid #6c6c6c;
}
.file-tools {
    gap: 2px;
    height: 29px;
    padding: 0 3px 0 5px;

    button { width: 22px; height: 22px; }
}
.fill { flex: 1; }
.tools {
    display: flex;
    align-items: center;
    gap: 1px;
    height: 22px;
    padding-left: 3px;
    background: linear-gradient(#fafafa, #e4e4e4);
    border-bottom: 1px solid #c6c6c6;
    font-family: Lato, "Open Sans", sans-serif;
    font-size: 10px;

    button { height: 20px; min-width: 21px; }
    .sep { background: #cfcfcf; }
    .on { border: 1px solid #9a8350; border-radius: 2px; background: linear-gradient(#fdf3d0, #fbd872); }
    .drop { min-width: 14px; }
    .low { align-self: flex-end; color: #777; }
}
.grip {
    width: 6px;
    height: 12px;
    background: radial-gradient(#b4b4b4 1px, transparent 1px) 0 0 / 3px 4px;
}
.grip.flat { width: 9px; height: 8px; margin-left: 1px; }
.second { height: 23px; border-bottom-color: #8c8c8c; background: linear-gradient(#f2f2f2, #d4d4d4); }
/* petit triangle des menus deroulants */
.menu { background: linear-gradient(135deg, transparent 50%, #111 50%) no-repeat 100% 100% / 4px 4px; }
.wide { gap: 3px; padding: 0 3px; }
.props { gap: 2px; color: #777; }
.approved {
    margin-left: 2px;
    padding: 0 2px;
    border: 2px solid #7cbc7c;
    border-radius: 3px;
    background: #fff;
    font: bold 9px "Liberation Serif", serif;
    color: #3f9a3f;
}
.tools .approved { height: 14px; }
.zoom {
    appearance: none;
    width: 66px;
    height: 14px;
    margin: 0 3px;
    background: linear-gradient(#c4c4c4, #c4c4c4) no-repeat 0 50% / 100% 1px;
}
.zoom::-webkit-slider-thumb {
    appearance: none;
    width: 8px;
    height: 11px;
    border: 1px solid #7c8a7c;
    border-radius: 1px 1px 4px 4px;
    background: linear-gradient(#f4f4f4 40%, #9bd39b);
}
.combo {
    display: flex;
    align-items: center;
    gap: 4px;
    padding-right: 2px;

    select {
        appearance: none;
        width: 34px;
        height: 15px;
        padding: 0 4px;
        border: 0;
        background: #fff;
        font: inherit;
    }
}

.work { display: flex; flex: 1; min-height: 0; }
.vtools {
    display: flex;
    flex-direction: column;
    flex: none;
    width: 34px;
    padding: 1px 0 0 3px;
    background: linear-gradient(90deg, #f4f4f4, #d9d9d9);

    button { justify-content: flex-start; gap: 4px; height: 21px; }
    .off .i8 { color: #888; }
    .more { margin-left: 21px; }
}
.doc-area {
    display: flex;
    flex-direction: column;
    flex: 1;
    min-width: 0;
    background: #ededed;
}
.doc-tabs {
    display: flex;
    justify-content: space-between;
    height: 21px;
    padding-top: 1px;
    border-bottom: 2px solid #fff;
    background: #828282;
    font-family: Lato, "Open Sans", sans-serif;

    a { padding: 0 6px; background: #fff; font-size: 10px; line-height: 18px; }
    button { width: 16px; background: #fff; }
    svg { opacity: .4; }
}
.page-view { display: flex; flex: 1; min-height: 0; }
.canvas {
    flex: 1;
    overflow: hidden;
    padding: 3px 6px 0 7px;
    background: #747474;
}
.paper {
    height: 120%;
    padding: 23px 32px;
    background: #fff;
    box-shadow: 0 0 0 1px #222, 2px 2px 2px #111;
    font: 7px/10px "Open Sans", sans-serif;
    color: #444;

    h3 { font-size: 12px; line-height: 19px; text-align: right; color: #333; }
    .meta { line-height: 13px; text-align: right; }
    .from { margin-top: 43px; }
    .to { margin: 2px 0 70px 61%; }
    .to p + p { margin-top: 15px; }
}
table {
    width: 100%;
    border-collapse: collapse;
    table-layout: fixed;

    th, td { height: 15px; padding: 0 2px; text-align: right; }
    th { background: #dcdcdc; }
    th:first-child, td:first-child { text-align: left; }
    .desc { width: 33%; }
    .date { width: 14%; }
    .qty { width: 9%; }
    .price { width: 20%; }
    .tva { width: 8%; }
}
.scroll {
    display: flex;
    flex-direction: column;
    width: 13px;
    background: #f0f0f0;
    color: #444;

    button { height: 14px; }
    .thumb { height: 40%; background: #cdcdcd; }
    .down { margin-top: auto; transform: rotate(180deg); }
}
.size-row {
    display: flex;
    align-items: center;
    height: 14px;
    font-family: Lato, "Open Sans", sans-serif;
    font-size: 10px;
    color: #999;

    span { padding: 0 12px 0 9px; color: #222; }
    .end { margin: 0 14px 0 auto; }
}
.pager {
    border: 0;

    input {
        width: 50px;
        height: 15px;
        margin: 0 2px;
        padding: 0;
        border: 0;
        background: #f3f3f3;
        font: inherit;
        text-align: center;
        color: #777;
    }
    label { padding-right: 5px; }
}
.status {
    height: 18px;
    padding-left: 4px;
    background: linear-gradient(#f8f8f8, #e2e2e2);
    font-size: 10px;
    line-height: 18px;
}
footer {
    gap: 6px;
    height: 20px;
    margin: 0 2px 1px 1px;
    padding: 0 6px 0 4px;

    button { margin-left: auto; color: #000; }
}
```
